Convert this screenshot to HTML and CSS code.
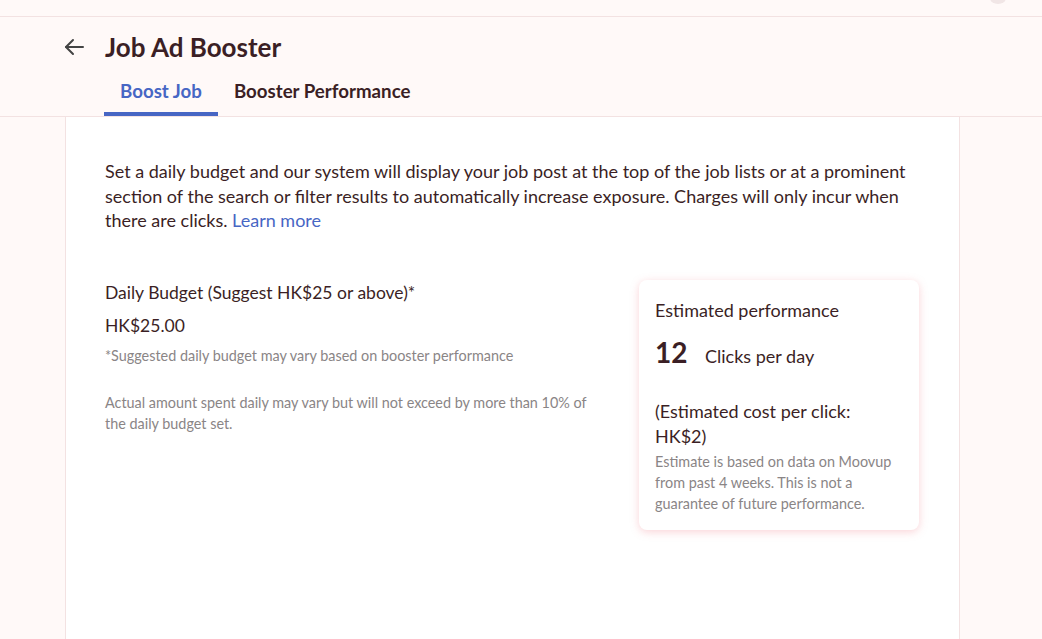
FILE: index.html
```html
<!DOCTYPE html>
<html lang="en">
<head>
  <meta charset="UTF-8">
  <meta name="viewport" content="width=device-width, initial-scale=1.0">
  <title>Job Ad Booster</title>
  <link rel="stylesheet" href="styles.css">
</head>
<body>

  <div class="top-bar">
    <span class="avatar"></span>
  </div>

  <header class="page-header">
    <div class="title-row">
      <svg class="back-icon" width="24" height="24" viewBox="0 0 24 24" fill="none" stroke="#444" stroke-width="2" stroke-linecap="round" stroke-linejoin="round">
        <path d="M21 12H4"/>
        <path d="M11 5l-7 7 7 7"/>
      </svg>
      <h1 class="page-title">Job Ad Booster</h1>
    </div>
    <nav class="tabs">
      <a class="tab active">Boost Job</a>
      <a class="tab">Booster Performance</a>
    </nav>
  </header>

  <main class="content">
    <p class="intro">
      Set a daily budget and our system will display your job post at the top of the job lists or at a prominent section of the search or filter results to automatically increase exposure. Charges will only incur when there are clicks. <a class="learn-more">Learn more</a>
    </p>

    <section class="budget-row">
      <div class="budget-column">
        <div class="budget-label">Daily Budget (Suggest HK$25 or above)*</div>
        <div class="budget-value">HK$25.00</div>
        <p class="note">*Suggested daily budget may vary based on booster performance</p>
        <p class="note spaced">Actual amount spent daily may vary but will not exceed by more than 10% of the daily budget set.</p>
      </div>

      <div class="estimate-card">
        <div class="estimate-title">Estimated performance</div>
        <div class="clicks-row">
          <span class="clicks-number">12</span>
          <span class="clicks-label">Clicks per day</span>
        </div>
        <div class="cost">(Estimated cost per click: HK$2)</div>
        <p class="note">Estimate is based on data on Moovup from past 4 weeks. This is not a guarantee of future performance.</p>
      </div>
    </section>
  </main>

</body>
</html>
```

FILE: styles.css
```css
body {
  font-family: 'Lato', 'Open Sans', sans-serif;
  background-color: #fff9f8;
  color: #3b1f25;
  margin: 0;
  height: 639px;
  overflow: hidden;
}

.top-bar {
  height: 16px;
  border-bottom: 1px solid #f3e2e2;
  position: relative;
}

.avatar {
  position: absolute;
  right: 36px;
  top: -8px;
  width: 16px;
  height: 12px;
  border-radius: 50%;
  background-color: #f1e6e6;
}

.page-header {
  height: 100px;
  border-bottom: 1px solid #f3e2e2;
  box-sizing: border-box;
  padding-left: 62px;
}

.title-row {
  display: flex;
  align-items: center;
  padding-top: 16px;
  height: 28px;
}

.back-icon {
  margin-right: 19px;
}

.page-title {
  margin: 0;
  font-size: 26px;
  font-weight: 700;
  color: #3b1f25;
}

.tabs {
  display: flex;
  margin-top: 12px;
  margin-left: 42px;
}

.tab {
  font-size: 18.7px;
  line-height: 24px;
  font-weight: 700;
  color: #3b1f25;
  padding: 6px 16px 9px;
  border-bottom: 4px solid transparent;
}

.tab.active {
  color: #4766c4;
  border-bottom-color: #4766c4;
}

.content {
  box-sizing: border-box;
  margin: 0 82px 0 65px;
  height: 522px;
  background-color: #fff;
  border-left: 1px solid #f3e2e2;
  border-right: 1px solid #f3e2e2;
  padding: 42px 39px 0 39px;
}

.intro {
  margin: 0;
  font-size: 18px;
  line-height: 24.5px;
}

.learn-more {
  color: #4766c4;
}

.budget-row {
  display: flex;
  justify-content: space-between;
  margin-top: 47px;
}

.budget-column {
  width: 500px;
  padding-top: 1px;
}

.budget-label {
  font-size: 17.5px;
  line-height: 24px;
}

.budget-value {
  font-size: 17.5px;
  line-height: 24px;
  margin-top: 9px;
}

.note {
  margin: 7px 0 0;
  font-size: 14.4px;
  line-height: 21px;
  color: #8a8586;
}

.note.spaced {
  margin-top: 26px;
}

.estimate-card {
  box-sizing: border-box;
  width: 280px;
  height: 250px;
  padding: 18px 16px;
  background-color: #fff;
  border-radius: 8px;
  box-shadow: 0 2px 8px rgba(240, 130, 140, 0.35);
  margin-right: 1px;
}

.estimate-title {
  font-size: 18px;
  line-height: 24px;
}

.clicks-row {
  display: flex;
  align-items: baseline;
  margin-top: 13px;
  line-height: 34px;
}

.clicks-number {
  font-size: 28px;
  font-weight: 700;
  width: 50px;
}

.clicks-label {
  font-size: 18px;
}

.cost {
  margin-top: 26px;
  font-size: 18px;
  line-height: 25px;
}

.estimate-card .note {
  margin-top: 2px;
}
```
